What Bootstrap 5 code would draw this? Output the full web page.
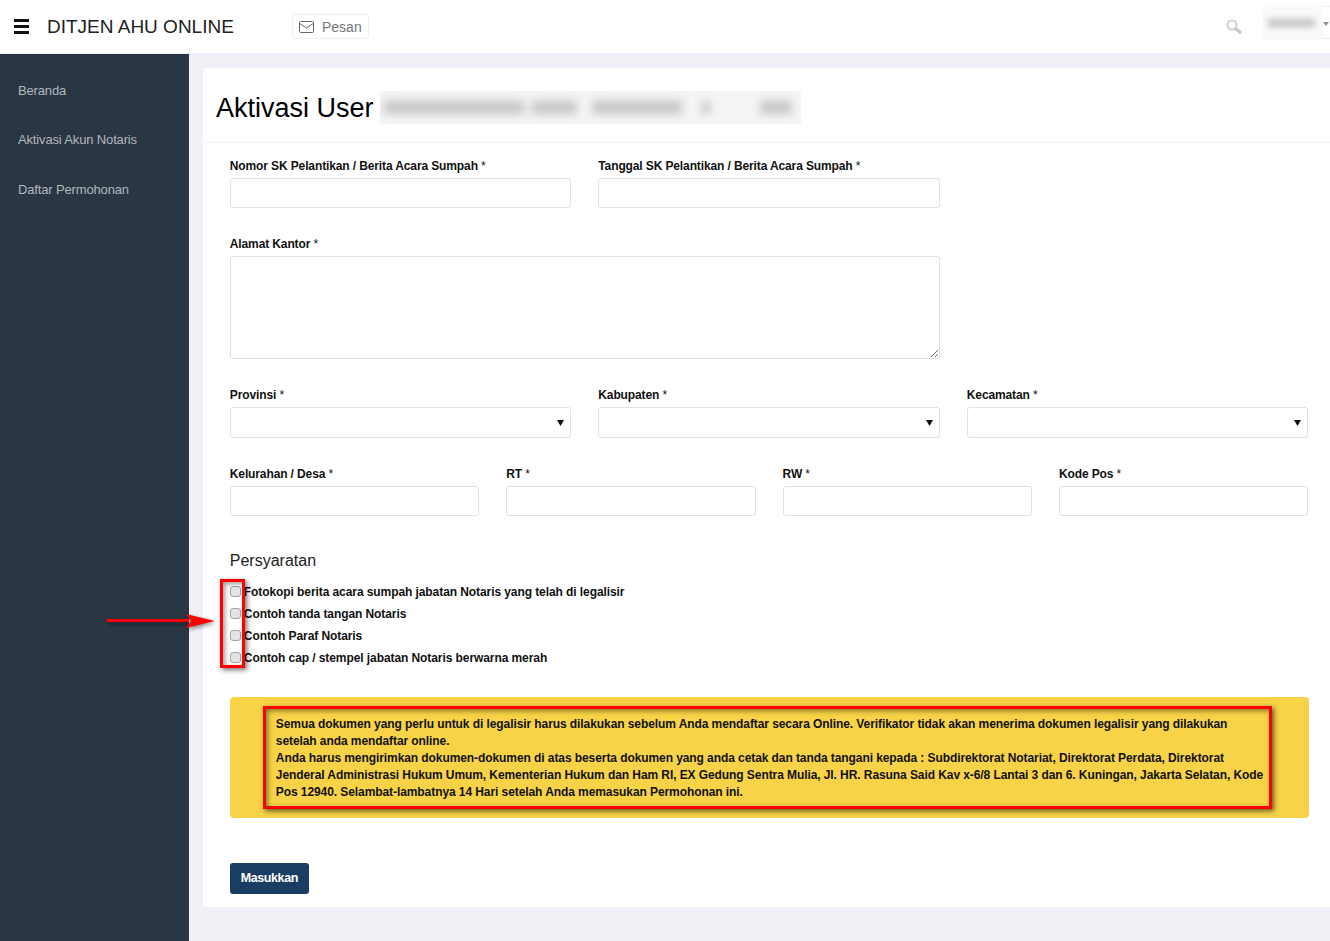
<!DOCTYPE html>
<html lang="id">
<head>
<meta charset="utf-8">
<title>Aktivasi User</title>
<link href="https://cdn.jsdelivr.net/npm/bootstrap@5.3.0/dist/css/bootstrap.min.css" rel="stylesheet">
<style>
html,body{height:100%}
body{font-family:"Liberation Sans",Arial,sans-serif;background:#eff1f6;color:#000;font-size:12px;min-height:941px;overflow:hidden}
.topbar{height:53px;background:#fff}
.burger{width:15px;margin:0 18px 0 14px;display:flex;flex-direction:column;gap:3px}
.burger i{display:block;height:3px;background:#111}
.brand-name{font-size:19px;color:#222;width:245px;line-height:1}
.msg-btn{height:25px;width:77px;border:1px solid #eceef2;border-radius:3px;color:#777;font-size:14px;background:#fff;padding:1px 0 0 6px;gap:8px}
.user-tools{margin-left:auto;position:relative;width:104px;height:53px}
.search-ic{position:absolute;left:0;top:19px}
.user-box{position:absolute;left:37px;top:4px;width:60px;height:36px;background:#fafafa;overflow:hidden}
.blur-bar{position:absolute;left:5px;top:15px;width:47px;height:8px;background:#c2c2c2;filter:blur(3px)}
.user-caret{position:absolute;left:97px;top:22px;width:0;height:0;border:3px solid transparent;border-top:4px solid #8a8f99;border-bottom:0}
.user-line{position:absolute;left:97px;top:6px;width:7px;height:33px;border-top:1px solid #eee;border-bottom:1px solid #eee}
.body-wrap{height:888px}
.side-nav{width:189px;background:#2a3644;flex:none;padding-top:11.700px;margin-top:1px}
.side-link{display:block;color:#b3b7bc;font-size:13px;letter-spacing:-.15px;padding:0 0 0 18px;height:49.500px;line-height:49px;text-decoration:none}
.main-area{flex:1;padding:15px 0 34px 14px;min-width:0}
.sheet{background:#fff;height:839px;border-radius:3px 0 0 3px}
.sheet-head{height:75px;border-bottom:1px solid #eff1f6;padding:23px 0 0 13px;gap:6px}
.sheet-title{font-size:27px;line-height:34px;margin:0;font-weight:400;color:#000}
.name-blur{width:421px;height:33px;background:#f5f5f5;position:relative;overflow:hidden}
.name-blur i{position:absolute;top:10px;height:13px;background:#c4c4c4;filter:blur(5px)}
.form-wrap{padding:14px 21.700px 0 26.800px}
.gut-row{--bs-gutter-x:27px;--bs-gutter-y:0}
.fgroup{margin-bottom:27px}
.flabel{display:block;font-weight:700;font-size:12px;line-height:17px;padding-top:1px;margin:0 0 3px;color:#111;letter-spacing:-.12px}
.flabel span{font-weight:400}
.finput.form-control,.finput.form-select{height:30px;border:1px solid #dfe1e5;border-radius:3px;padding:4px 10px;font-size:12px;box-shadow:none}
.finput.form-select{height:31px;background-image:url("data:image/svg+xml,%3Csvg xmlns='http://www.w3.org/2000/svg' width='7' height='7'%3E%3Cpath d='M0 1h7L3.500 7z' fill='%23111'/%3E%3C/svg%3E");background-size:7px 7px;background-position:right 6px center}
textarea.finput.form-control{height:103px}
.req-title{font-size:16px;line-height:20px;margin:0 0 10px;font-weight:400;color:#222;padding-top:8px}
.req-list{position:relative;height:100px}
.req-item{height:22px;display:flex;align-items:center;font-weight:700;font-size:12px;color:#111;letter-spacing:-.08px;gap:3px}
.req-check{width:11px;height:11px;margin:0 0 2px;appearance:none;flex:none;background:#e3e3e3;border:1px solid #a5a5a5;border-radius:3px}
.mark-box{position:absolute;left:-10px;top:-2px;width:25px;height:89px;border:3px solid #f00;box-shadow:2px 2px 5px rgba(0,0,0,.55),inset 2px 2px 5px rgba(0,0,0,.4)}
.mark-arrow{position:absolute;left:-123px;top:32px;filter:drop-shadow(1px 2px 2px rgba(0,0,0,.45))}
.note-box{background:#f8d347;border-radius:4px;margin-top:16px;height:121px;padding:9px 37px 9px 33px;width:1079px}
.note-inner{height:103px;border:3px solid #f00;box-shadow:2px 2px 5px rgba(0,0,0,.6),inset 2px 2px 5px rgba(0,0,0,.45);padding:7px 2px 0 10px;font-weight:700;font-size:12px;line-height:17px;color:#111;letter-spacing:-.08px}
.submit-btn{margin-top:45px;width:79px;height:31px;background:#1a3e63;border-radius:3px;color:#fff;font-size:12.500px;font-weight:700;letter-spacing:-.4px;border:0;padding:0}
.submit-btn:hover{background:#1a3e63;color:#fff}
</style>
</head>
<body>
<header class="topbar d-flex align-items-center">
  <div class="burger"><i></i><i></i><i></i></div>
  <div class="brand-name">DITJEN AHU ONLINE</div>
  <button type="button" class="msg-btn btn d-inline-flex align-items-center">
    <svg width="15" height="12" viewBox="0 0 15 12" fill="none" stroke="#666" stroke-width="1"><rect x=".5" y=".5" width="14" height="11" rx="1"/><path d="M.8 2.500 7.500 7l6.700-4.500"/></svg>
    Pesan
  </button>
  <div class="user-tools">
    <svg class="search-ic" width="16" height="16" viewBox="0 0 16 16" fill="none"><circle cx="6" cy="6" r="4.500" stroke="#cfcfcf" stroke-width="2"/><path d="M9.500 9.500 15 14" stroke="#c4c4c4" stroke-width="3"/></svg>
    <div class="user-box"><div class="blur-bar"></div></div>
    <div class="user-line"></div>
    <div class="user-caret"></div>
  </div>
</header>
<div class="body-wrap d-flex">
  <nav class="side-nav">
    <a class="side-link" href="#">Beranda</a>
    <a class="side-link" href="#">Aktivasi Akun Notaris</a>
    <a class="side-link" href="#">Daftar Permohonan</a>
  </nav>
  <main class="main-area">
    <div class="sheet">
      <div class="sheet-head d-flex align-items-start">
        <h1 class="sheet-title">Aktivasi User</h1>
        <div class="name-blur">
          <i style="left:4px;width:140px"></i><i style="left:152px;width:45px"></i><i style="left:212px;width:90px"></i><i style="left:322px;width:8px"></i><i style="left:380px;width:32px"></i>
        </div>
      </div>
      <form class="form-wrap">
        <div class="row gut-row">
          <div class="col-4 fgroup"><label class="flabel">Nomor SK Pelantikan / Berita Acara Sumpah <span>*</span></label><input class="form-control finput" type="text"></div>
          <div class="col-4 fgroup"><label class="flabel">Tanggal SK Pelantikan / Berita Acara Sumpah <span>*</span></label><input class="form-control finput" type="text"></div>
        </div>
        <div class="row gut-row">
          <div class="col-8 fgroup"><label class="flabel">Alamat Kantor <span>*</span></label><textarea class="form-control finput"></textarea></div>
        </div>
        <div class="row gut-row">
          <div class="col-4 fgroup"><label class="flabel">Provinsi <span>*</span></label><select class="form-select finput"></select></div>
          <div class="col-4 fgroup"><label class="flabel">Kabupaten <span>*</span></label><select class="form-select finput"></select></div>
          <div class="col-4 fgroup"><label class="flabel">Kecamatan <span>*</span></label><select class="form-select finput"></select></div>
        </div>
        <div class="row gut-row">
          <div class="col-3 fgroup"><label class="flabel">Kelurahan / Desa <span>*</span></label><input class="form-control finput" type="text"></div>
          <div class="col-3 fgroup"><label class="flabel">RT <span>*</span></label><input class="form-control finput" type="text"></div>
          <div class="col-3 fgroup"><label class="flabel">RW <span>*</span></label><input class="form-control finput" type="text"></div>
          <div class="col-3 fgroup"><label class="flabel">Kode Pos <span>*</span></label><input class="form-control finput" type="text"></div>
        </div>
        <h2 class="req-title">Persyaratan</h2>
        <div class="req-list">
          <label class="req-item"><input class="req-check" type="checkbox">Fotokopi berita acara sumpah jabatan Notaris yang telah di legalisir</label>
          <label class="req-item"><input class="req-check" type="checkbox">Contoh tanda tangan Notaris</label>
          <label class="req-item"><input class="req-check" type="checkbox">Contoh Paraf Notaris</label>
          <label class="req-item"><input class="req-check" type="checkbox">Contoh cap / stempel jabatan Notaris berwarna merah</label>
          <div class="mark-box"></div>
          <svg class="mark-arrow" width="110" height="16" viewBox="0 0 110 16"><rect x="0" y="6" width="82" height="3" fill="#f00"/><path d="M79 1 108 8 79 15 84 8z" fill="#f00"/></svg>
        </div>
        <div class="note-box">
          <div class="note-inner">Semua dokumen yang perlu untuk di legalisir harus dilakukan sebelum Anda mendaftar secara Online. Verifikator tidak akan menerima dokumen legalisir yang dilakukan setelah anda mendaftar online.<br>Anda harus mengirimkan dokumen-dokumen di atas beserta dokumen yang anda cetak dan tanda tangani kepada : Subdirektorat Notariat, Direktorat Perdata, Direktorat Jenderal Administrasi Hukum Umum, Kementerian Hukum dan Ham RI, EX Gedung Sentra Mulia, Jl. HR. Rasuna Said Kav x-6/8 Lantai 3 dan 6. Kuningan, Jakarta Selatan, Kode Pos 12940. Selambat-lambatnya 14 Hari setelah Anda memasukan Permohonan ini.</div>
        </div>
        <button type="button" class="btn submit-btn">Masukkan</button>
      </form>
    </div>
  </main>
</div>
</body>
</html>
